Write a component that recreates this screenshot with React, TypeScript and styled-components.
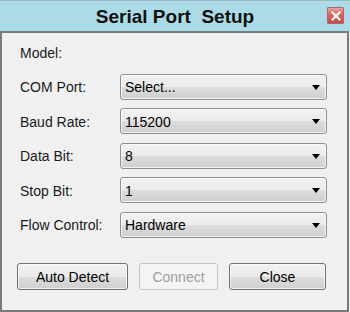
import React from "react"
import styled, { createGlobalStyle } from "styled-components"

const GlobalStyle = createGlobalStyle`
    html, body {
        margin: 0;
        padding: 0;
        background: #f0f0f0;
    }
    * {
        box-sizing: border-box;
    }
`

interface FieldRow {
    label: string
    value?: string
}

const rows: FieldRow[] = [
    { label: "Model:" },
    { label: "COM Port:", value: "Select..." },
    { label: "Baud Rate:", value: "115200" },
    { label: "Data Bit:", value: "8" },
    { label: "Stop Bit:", value: "1" },
    { label: "Flow Control:", value: "Hardware" },
]

const App = () => {
    return (
        <Window>
            <GlobalStyle />
            <TitleBar>
                <Title>Serial Port  Setup</Title>
                <CloseBox aria-label="close">
                    <svg width="10" height="10" viewBox="0 0 10 10">
                        <path d="M1.5 1.5 L8.5 8.5 M8.5 1.5 L1.5 8.5" stroke="#fff" strokeWidth="2.2" strokeLinecap="square" />
                    </svg>
                </CloseBox>
            </TitleBar>

            <Body>
                <Form>
                    {rows.map((row) => (
                        <React.Fragment key={row.label}>
                            <Label>{row.label}</Label>
                            {row.value ? (
                                <Combo>
                                    <ComboText>{row.value}</ComboText>
                                    <Arrow />
                                </Combo>
                            ) : (
                                <span />
                            )}
                        </React.Fragment>
                    ))}
                </Form>

                <Buttons>
                    <Button $width={111}>Auto Detect</Button>
                    <Button $width={79} disabled>
                        Connect
                    </Button>
                    <Button $width={97}>Close</Button>
                </Buttons>
            </Body>
        </Window>
    )
}

const Window = styled.div`
    width: 350px;
    height: 312px;
    display: flex;
    flex-direction: column;
    font-family: "Liberation Sans", Arial, sans-serif;
    color: #000;
`

const TitleBar = styled.div`
    height: 31px;
    position: relative;
    display: flex;
    align-items: center;
    justify-content: center;
    background: #acdae6;
    border-top: 1px solid #9ab8c0;
`

const Title = styled.div`
    font-weight: bold;
    font-size: 19px;
    white-space: pre;
    margin-top: 1px;
    color: #111;
`

const CloseBox = styled.div`
    position: absolute;
    right: 6px;
    top: 6px;
    width: 17px;
    height: 17px;
    display: flex;
    align-items: center;
    justify-content: center;
    background: linear-gradient(#e8a09a, #d86860 45%, #c84a44);
    border: 1px solid #b86070;
    border-radius: 1px;
`

const Body = styled.div`
    flex: 1;
    display: flex;
    flex-direction: column;
    border: 2px solid #7a7a7a;
    margin-right: 1px;
    background: #f0f0f0;
    padding: 6px 0 0 18px;
`

const Form = styled.div`
    display: grid;
    grid-template-columns: 100px 207px;
    grid-auto-rows: 26px;
    row-gap: 8.5px;
`

const Label = styled.div`
    font-size: 14px;
    display: flex;
    align-items: center;
    padding-top: 1px;
    color: #1a1a1a;
`

const Combo = styled.div`
    display: flex;
    align-items: center;
    justify-content: space-between;
    padding: 0 6px 0 4px;
    border: 1px solid #8e8f8f;
    border-radius: 3px;
    background: linear-gradient(#f2f2f2, #ebebeb 50%, #dddddd 51%, #cfcfcf);
    box-shadow: inset 0 0 0 1px rgba(255, 255, 255, 0.7);
`

const ComboText = styled.span`
    font-size: 14px;
    padding-top: 1px;
`

const Arrow = styled.span`
    width: 0;
    height: 0;
    border-left: 4.5px solid transparent;
    border-right: 4.5px solid transparent;
    border-top: 5px solid #000;
    margin-top: 1px;
`

const Buttons = styled.div`
    display: flex;
    gap: 11px;
    margin-top: 25px;
    margin-left: -3px;
`

const Button = styled.button<{ $width: number }>`
    width: ${(p) => p.$width}px;
    height: 27px;
    font-family: "Liberation Sans", Arial, sans-serif;
    font-size: 14px;
    color: #000;
    border: 1px solid #707070;
    border-radius: 3px;
    background: linear-gradient(#f2f2f2, #ebebeb 50%, #dddddd 51%, #cfcfcf);
    box-shadow: inset 0 0 0 1px rgba(255, 255, 255, 0.7);
    padding: 1px 0 0;

    &:disabled {
        color: #a0a0a0;
        border-color: #c2c4c6;
        background: #f4f4f4;
        box-shadow: none;
    }
`

export default App
